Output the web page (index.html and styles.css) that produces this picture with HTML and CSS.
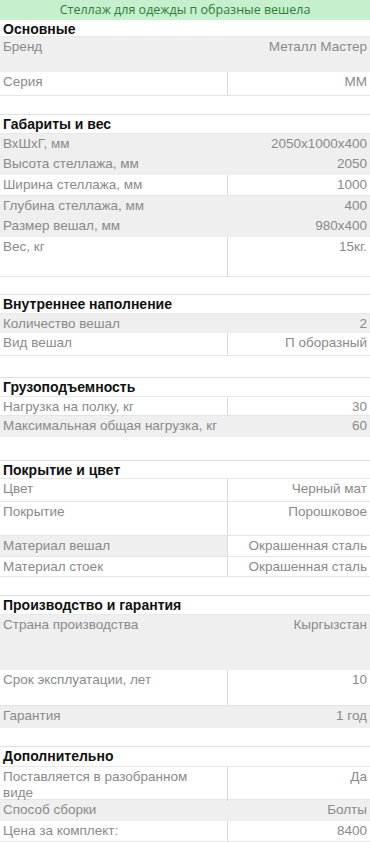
FILE: index.html
```html
<!DOCTYPE html>
<html lang="ru">
<head>
<meta charset="utf-8">
<link rel="stylesheet" href="styles.css">
</head>
<body>
<div class="sheet">
  <div class="title">Стеллаж для одежды п образные вешела</div>

  <div class="row head h17"><div class="k">Основные</div></div>
  <div class="row gray h35"><div class="k">Бренд</div><div class="v">Металл Мастер</div></div>
  <div class="row line h24"><div class="k">Серия</div><div class="v">ММ</div></div>
  <div class="row empty h19"></div>

  <div class="row head h19"><div class="k">Габариты и вес</div></div>
  <div class="row gray h20"><div class="k">ВхШхГ, мм</div><div class="v">2050х1000х400</div></div>
  <div class="row gray h21"><div class="k">Высота стеллажа, мм</div><div class="v">2050</div></div>
  <div class="row line h21"><div class="k">Ширина стеллажа, мм</div><div class="v">1000</div></div>
  <div class="row gray h20"><div class="k">Глубина стеллажа, мм</div><div class="v">400</div></div>
  <div class="row gray h21"><div class="k">Размер вешал, мм</div><div class="v">980х400</div></div>
  <div class="row line h40"><div class="k">Вес, кг</div><div class="v">15кг.</div></div>
  <div class="row empty h18"></div>

  <div class="row head h19"><div class="k">Внутреннее наполнение</div></div>
  <div class="row gray h19"><div class="k">Количество вешал</div><div class="v">2</div></div>
  <div class="row line h23"><div class="k">Вид вешал</div><div class="v">П оборазный</div></div>
  <div class="row empty h22"></div>

  <div class="row head h19"><div class="k">Грузоподъемность</div></div>
  <div class="row line h19"><div class="k">Нагрузка на полку, кг</div><div class="v">30</div></div>
  <div class="row gray h21"><div class="k">Максимальная общая нагрузка, кг</div><div class="v">60</div></div>
  <div class="row empty h24"></div>

  <div class="row head h18"><div class="k">Покрытие и цвет</div></div>
  <div class="row line h23"><div class="k">Цвет</div><div class="v">Черный мат</div></div>
  <div class="row line h34"><div class="k">Покрытие</div><div class="v">Порошковое</div></div>
  <div class="row line split h21"><div class="k">Материал вешал</div><div class="v">Окрашенная сталь</div></div>
  <div class="row line h20"><div class="k">Материал стоек</div><div class="v">Окрашенная сталь</div></div>
  <div class="row empty h19"></div>

  <div class="row head h19"><div class="k">Производство и гарантия</div></div>
  <div class="row gray h55"><div class="k">Страна производства</div><div class="v">Кыргызстан</div></div>
  <div class="row line h36"><div class="k">Срок эксплуатации, лет</div><div class="v">10</div></div>
  <div class="row gray h22"><div class="k">Гарантия</div><div class="v">1 год</div></div>
  <div class="row empty h19"></div>

  <div class="row head h20"><div class="k">Дополнительно</div></div>
  <div class="row line h33"><div class="k">Поставляется в разобранном<br>виде</div><div class="v">Да</div></div>
  <div class="row gray h21"><div class="k">Способ сборки</div><div class="v">Болты</div></div>
  <div class="row line h21"><div class="k">Цена за комплект:</div><div class="v">8400</div></div>
</div>
</body>
</html>
```

FILE: styles.css
```css
html, body {
  margin: 0;
  padding: 0;
  background: #ffffff;
}

.sheet {
  width: 370px;
  font-family: "Liberation Sans", Arial, sans-serif;
  font-size: 13.5px;
  color: #8a8a8a;
}

.title {
  height: 20px;
  box-sizing: border-box;
  background: #c6efce;
  color: #2f7d38;
  text-align: center;
  font-size: 12.5px;
  line-height: 20px;
  font-family: "Open Sans", "Liberation Sans", sans-serif;
}

.row {
  display: grid;
  grid-template-columns: 227px 1fr;
  box-sizing: border-box;
  background: #ffffff;
  border-bottom: 1px solid #e4e4e4;
}

.k, .v {
  padding: 2px 3px 0;
  line-height: 16px;
  box-sizing: border-box;
}

.v {
  text-align: right;
}

.head {
  border-bottom: 1px solid #e8e8e8;
}

.head .k {
  grid-column: 1 / 3;
  color: #111111;
  font-weight: bold;
  font-size: 14px;
  padding-top: 1px;
}

.gray {
  background: #efefef;
  border-bottom-color: #efefef;
}

.line .v {
  border-left: 1px solid #d8d8d8;
}

.split .k {
  background: #efefef;
}

.empty {
  border-bottom-color: #e0e0e0;
}

.h17 { height: 17px; }
.h18 { height: 18px; }
.h19 { height: 19px; }
.h20 { height: 20px; }
.h21 { height: 21px; }
.h22 { height: 22px; }
.h23 { height: 23px; }
.h24 { height: 24px; }
.h33 { height: 33px; }
.h34 { height: 34px; }
.h35 { height: 35px; }
.h36 { height: 36px; }
.h40 { height: 40px; }
.h55 { height: 55px; }
```
